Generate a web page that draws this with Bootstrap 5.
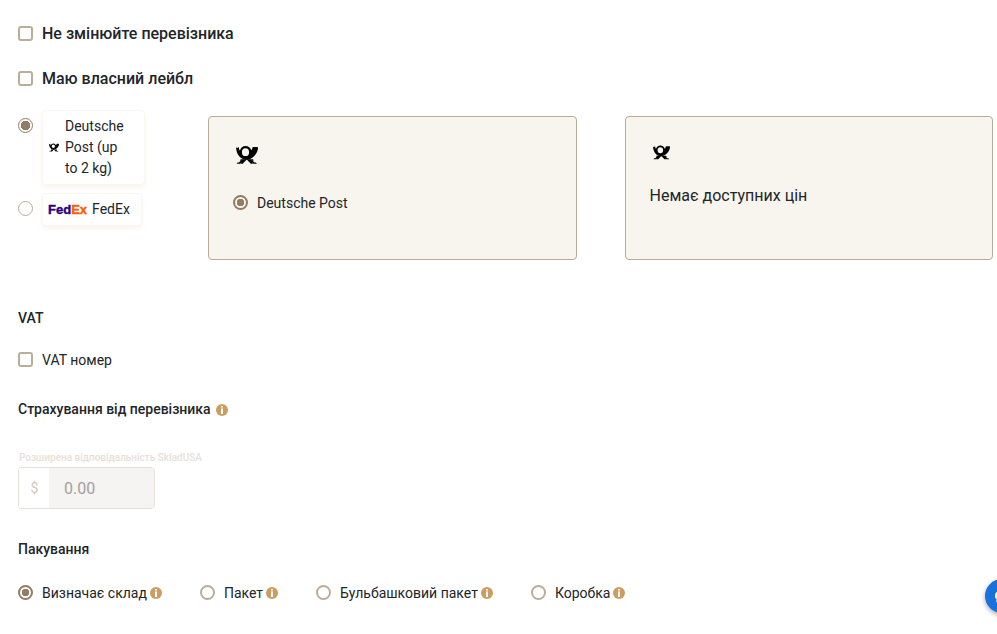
<!DOCTYPE html>
<html lang="uk">
<head>
<meta charset="utf-8">
<meta name="viewport" content="width=device-width, initial-scale=1">
<title>Доставка</title>
<link href="https://cdn.jsdelivr.net/npm/bootstrap@5.3.0/dist/css/bootstrap.min.css" rel="stylesheet">
<style>
  body { font-family: Roboto, "Liberation Sans", sans-serif; font-size: 14px; line-height: 21px; color: #212529; background: #fff; overflow-x: hidden; }
  .shipping { padding: 20px 4px 16px 18px; }
  .pick { appearance: none; flex: none; width: 15px; height: 15px; margin: 0; background: #fff; border: 2px solid #bcad9b; }
  .pick[type=checkbox] { border-radius: 3px; }
  .pick[type=radio] { border-radius: 50%; }
  .pick[type=radio]:checked { border-color: #927c64; background: radial-gradient(circle, #927c64 3.5px, transparent 4px); }
  .pick-thin { border-width: 1px; }
  .pick[type=radio].pick-thin:checked { background: radial-gradient(circle, #927c64 4.5px, transparent 5px); }
  .option { display: flex; align-items: center; gap: 9px; }
  .option-text { padding-top: 2px; }
  .option-lg { font-size: 16px; line-height: 24px; font-weight: 500; margin-bottom: 19px; }
  .heading { font-size: 14px; line-height: 21px; font-weight: 500; margin: 0; }
  .carriers { flex: none; width: 142px; display: flex; flex-direction: column; gap: 8px; }
  .carrier-tile { display: flex; align-items: center; gap: 6px; padding: 5px 11px 5px 5px; border: 1px solid #faf6f0; border-radius: 4px; box-shadow: 0 3px 5px rgba(190,140,70,.09); }
  .carrier-tile-wide { gap: 5px; }
  .carrier-name { max-width: 68px; }
  .carrier-horn { flex: none; margin-left: 1px; }
  .carrier-pick { margin-top: 8px; }
  .fedex { font: 700 13px/21px "Liberation Sans", Arial, sans-serif; color: #2a007c; -webkit-text-stroke: .4px currentColor; }
  .fedex b { color: #ff5a00; }
  .rates { gap: 48px; padding: 6px 0 0 48px; }
  .rate { flex: 1 1 0; min-height: 144px; background: #f8f5ee; border: 1px solid #b9ab99; border-radius: 4px; padding: 28px 24px; }
  .rate-logo { margin-left: 3px; display: block; }
  .rate-option { margin-top: 26px; }
  .no-rates { font-size: 16px; line-height: 24px; }
  .info { flex: none; width: 12px; height: 12px; display: block; }
  .insurance { gap: 5px; }
  .liability-label { font-size: 10px; line-height: 15px; font-weight: 500; color: #e8e0d8; padding-left: 1px; margin: 30px 0 2px; }
  .amount { width: 137px; height: 42px; border: 1px solid #e6dfd6; border-radius: 4px; overflow: hidden; }
  .amount .input-group-text { width: 31px; justify-content: center; padding: 0; border: 0; border-radius: 0; background: #fff; color: #d2c9be; font-size: 14px; }
  .amount .form-control { border: 0; border-radius: 0; background: #f5f4f2; color: #a2a09e; font-size: 16px; padding: 2px 15px 0; }
  .vat-option { margin-top: 19px; }
  .packing-title { margin-top: 30px; }
  .packing { gap: 38px; margin-top: 21px; }
  .packing .option-text { margin-right: -6px; }
  .chat { position: fixed; right: -22px; bottom: 21px; width: 34px; height: 34px; border: 0; border-radius: 50%; padding: 0; background: #1972dc; box-shadow: 0 2px 5px rgba(0,0,0,.35); }
</style>
<script src="https://cdn.jsdelivr.net/npm/bootstrap@5.3.0/dist/js/bootstrap.bundle.min.js"></script>
</head>
<body>
<svg width="0" height="0" class="position-absolute" aria-hidden="true">
  <symbol id="horn" viewBox="0 0 22 18">
    <path fill-rule="evenodd" d="M0 1.500 1.300 2 2.800 1C2.900 2.500 3.100 3.500 3.900 4.500 4.700 1.800 6.700 0 9.600 0c2.900 0 4.900 1.700 5.600 4.300.9-.9 1-2.100 1.400-3.100 1.700-.4 3.700-.3 5.400.1.100 2.700-.9 4.900-2.200 6.800-2.300 3.300-5.100 5.600-9.300 5.600C4.600 13.700.5 8.800 0 1.500ZM9.500 2.300a3.600 3.900 0 1 0 0 7.800 3.600 3.900 0 0 0 0-7.800Z"/>
    <path d="M4.800 13.300H11l-4.300 4.500H4.500l1.600-1.900-2 1.900H.6l1-1.200h1.300l2-2.200H3.800ZM10.500 13.300h6.400l1 1.100h-1.400l2 2.200h1.400l1 1.200h-3.500l-2-1.900 1.600 1.900h-2.200Z"/>
  </symbol>
  <symbol id="info" viewBox="0 0 12 12">
    <circle cx="6" cy="6" r="6" fill="#cc9c60"/>
    <path fill="#fff" d="M5 2h2v1.500H5ZM5 4.500h2V10H5Z"/>
  </symbol>
</svg>

<form class="shipping">
  <div class="option option-lg">
    <input class="pick" type="checkbox" id="keep"><label class="option-text" for="keep">Не змінюйте перевізника</label>
  </div>
  <div class="option option-lg">
    <input class="pick" type="checkbox" id="own"><label class="option-text" for="own">Маю власний лейбл</label>
  </div>

  <div class="d-flex">
    <div class="carriers">
      <div class="option align-items-start">
        <input class="pick pick-thin carrier-pick" type="radio" name="carrier" id="dp" checked>
        <label class="carrier-tile" for="dp">
          <svg class="carrier-horn" width="10" height="9" aria-hidden="true"><use href="#horn"/></svg>
          <span class="carrier-name">Deutsche Post (up to&nbsp;2&nbsp;kg)</span>
        </label>
      </div>
      <div class="option align-items-start">
        <input class="pick pick-thin carrier-pick" type="radio" name="carrier" id="fx">
        <label class="carrier-tile carrier-tile-wide" for="fx">
          <span class="fedex" aria-hidden="true">Fed<b>Ex</b></span>
          <span>FedEx</span>
        </label>
      </div>
    </div>
    <div class="rates d-flex flex-grow-1">
      <div class="rate">
        <svg class="rate-logo" width="22" height="20" aria-hidden="true"><use href="#horn"/></svg>
        <div class="option rate-option">
          <input class="pick" type="radio" name="rate" id="rate-dp" checked><label class="option-text" for="rate-dp">Deutsche Post</label>
        </div>
      </div>
      <div class="rate">
        <svg class="rate-logo" width="17" height="15" aria-hidden="true"><use href="#horn"/></svg>
        <div class="no-rates mt-4">Немає доступних цін</div>
      </div>
    </div>
  </div>

  <h2 class="heading mt-5">VAT</h2>
  <div class="option vat-option">
    <input class="pick" type="checkbox" id="vat"><label class="option-text" for="vat">VAT номер</label>
  </div>

  <div class="insurance d-flex align-items-center mt-4 pt-1">
    <h2 class="heading">Страхування від перевізника</h2>
    <svg class="info" aria-hidden="true"><use href="#info"/></svg>
  </div>
  <label class="liability-label d-block" for="cover">Розширена відповідальність SkladUSA</label>
  <div class="input-group amount flex-nowrap">
    <span class="input-group-text">$</span>
    <input class="form-control" type="text" id="cover" value="0.00" disabled>
  </div>

  <h2 class="heading packing-title">Пакування</h2>
  <div class="packing d-flex flex-wrap">
    <div class="option">
      <input class="pick" type="radio" name="pack" id="p1" checked><label class="option-text" for="p1">Визначає склад</label>
      <svg class="info" aria-hidden="true"><use href="#info"/></svg>
    </div>
    <div class="option">
      <input class="pick" type="radio" name="pack" id="p2"><label class="option-text" for="p2">Пакет</label>
      <svg class="info" aria-hidden="true"><use href="#info"/></svg>
    </div>
    <div class="option">
      <input class="pick" type="radio" name="pack" id="p3"><label class="option-text" for="p3">Бульбашковий пакет</label>
      <svg class="info" aria-hidden="true"><use href="#info"/></svg>
    </div>
    <div class="option">
      <input class="pick" type="radio" name="pack" id="p4"><label class="option-text" for="p4">Коробка</label>
      <svg class="info" aria-hidden="true"><use href="#info"/></svg>
    </div>
  </div>
</form>

<button class="chat" type="button" aria-label="Чат">
  <svg width="14" height="14" viewBox="0 0 14 14" class="d-block mx-auto" aria-hidden="true"><path fill="#fff" d="M7 1c4 0 7 2.500 7 6s-3 6-7 6c-1 0-2-.2-3-.6L1 13l.8-2.500C.6 9.600 0 8.500 0 7c0-3.500 3-6 7-6Z"/></svg>
</button>
</body>
</html>
